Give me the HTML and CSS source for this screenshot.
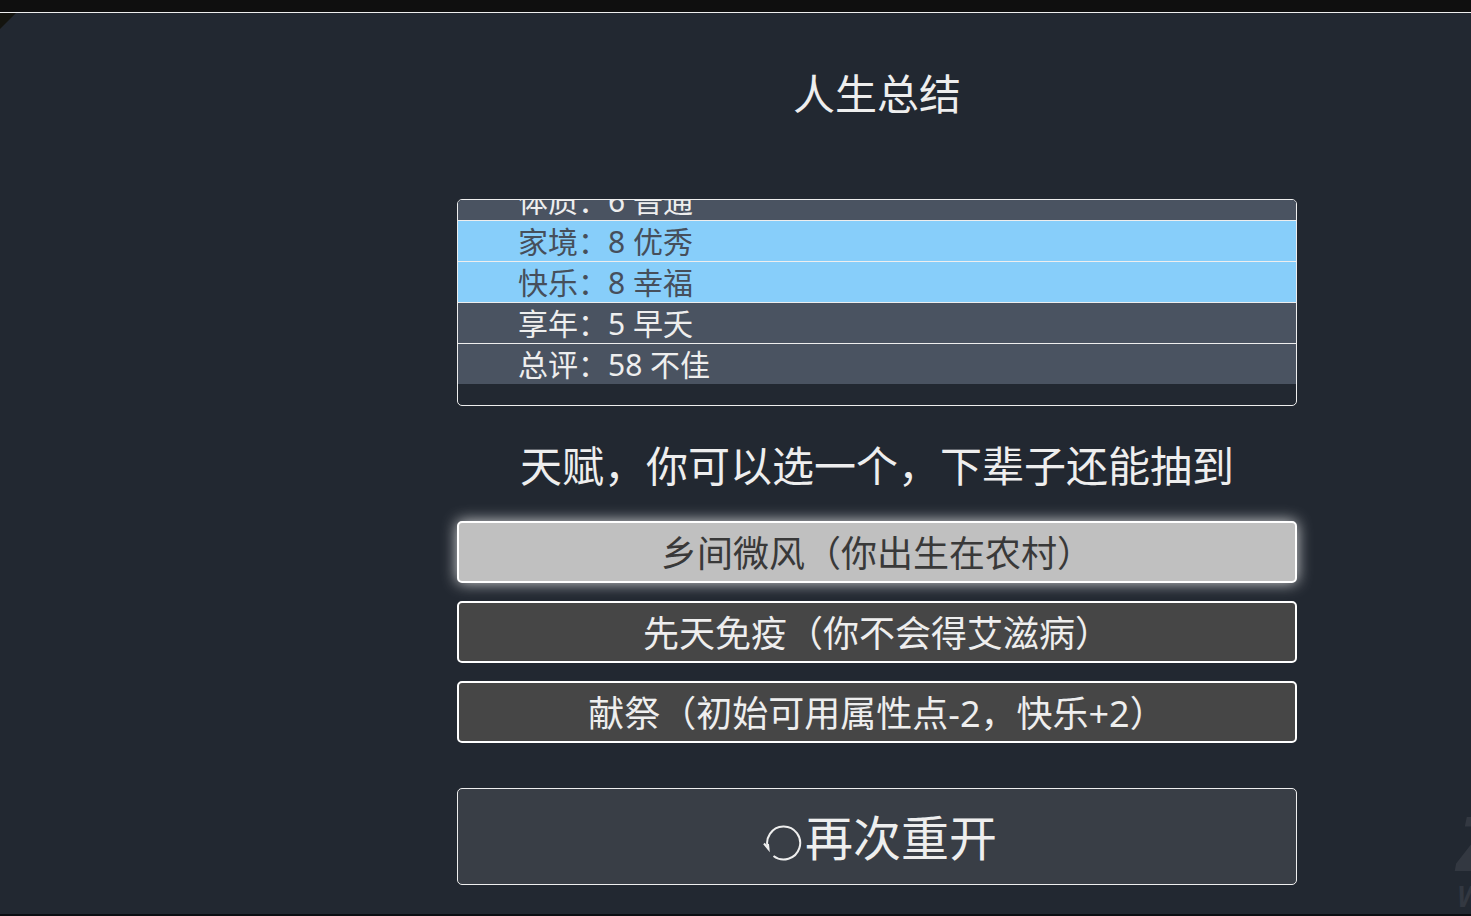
FILE: index.html
```html
<!DOCTYPE html>
<html lang="zh-CN">
<head>
    <meta charset="UTF-8">
    <meta name="viewport" content="width=device-width, initial-scale=1.0">
    <title>人生总结</title>
    <link rel="stylesheet" href="styles.css">
</head>
<body>
    <div class="topbar"></div>

    <main class="page">
        <div class="corner"></div>

        <div class="summary">
            <h1>人生总结</h1>

            <ul class="judge">
                <li>体质：6 普通</li>
                <li class="grade">家境：8 优秀</li>
                <li class="grade">快乐：8 幸福</li>
                <li>享年：5 早夭</li>
                <li>总评：58 不佳</li>
            </ul>

            <h2>天赋，你可以选一个，下辈子还能抽到</h2>

            <div class="talents">
                <button type="button" class="talent selected">乡间微风（你出生在农村）</button>
                <button type="button" class="talent">先天免疫（你不会得艾滋病）</button>
                <button type="button" class="talent">献祭（初始可用属性点-2，快乐+2）</button>
            </div>

            <button type="button" class="again">
                <svg class="again-icon" viewBox="0 0 48 48" aria-hidden="true">
                    <path d="M16.5 42 A16.5 16.5 0 1 0 11.3 35"/>
                    <path d="M7 29.5 L11.5 35 L11 30"/>
                </svg>
                <span>再次重开</span>
            </button>
        </div>

        <div class="mark">
            <span class="mark-big">Z</span>
            <span class="mark-small">W</span>
        </div>
    </main>
</body>
</html>
```

FILE: styles.css
```css
* {
    box-sizing: border-box;
}
body {
    margin: 0;
    min-height: 100vh;
    display: flex;
    flex-direction: column;
    background-color: #222831;
    color: #eee;
    font-family: "Noto Sans", "Noto Sans CJK SC", sans-serif;
    border-bottom: 2px solid #0b0d12;
}
.topbar {
    height: 13px;
    background-color: #0f0f0f;
    border-bottom: 1px solid #eee;
}
.page {
    position: relative;
    flex: 1;
    display: flex;
    justify-content: center;
    padding: 53px 0 29px 283px;
    overflow: hidden;
}
.corner {
    position: absolute;
    top: 0;
    left: 0;
    border-top: 16px solid #14140f;
    border-right: 16px solid transparent;
}
.summary {
    width: 100%;
    max-width: 840px;
    display: flex;
    flex-direction: column;
}
h1, h2 {
    margin: 0;
    font-size: 42px;
    line-height: 56px;
    font-weight: 400;
    text-align: center;
}

/* scrolled to the end, so the first row is cut by the top edge */
.judge {
    height: 207px;
    margin: 77px 0 32px;
    padding: 0 0 21px;
    list-style: none;
    display: flex;
    flex-direction: column;
    justify-content: flex-end;
    border: 1px solid #eee;
    border-radius: 5px;
    overflow: hidden;
}
.judge li {
    flex: none;
    padding: 2px 0 0 60px;
    border-top: 1px solid #eee;
    background-color: #4a5361;
    font-size: 30px;
    line-height: 38px;
}
.judge .grade {
    background-color: #87cefa;
    color: #464f5b;
}

.talents {
    display: flex;
    flex-direction: column;
    gap: 18px;
    margin: 27px 0 45px;
}
button {
    font-family: inherit;
    color: #eee;
    border-radius: 5px;
    cursor: pointer;
}
.talent {
    padding: 6px 4px 2px;
    border: 2px solid #fff;
    background-color: #464646;
    font-size: 36px;
    line-height: 50px;
}
.selected {
    background-color: #c0c0c0;
    color: #393939;
    box-shadow: 0 0 15px rgba(255, 255, 255, 0.8);
}
.again {
    display: flex;
    align-items: center;
    justify-content: center;
    padding: 16px 15px 14px;
    border: 1px solid #eee;
    background-color: #393e46;
    font-size: 48px;
    line-height: 65px;
}
.again-icon {
    width: 48px;
    height: 48px;
    fill: none;
    stroke: #eee;
    stroke-width: 2;
}

/* faint site mark running off the right edge */
.mark {
    position: absolute;
    left: calc(100% - 14px);
    bottom: 0;
    display: flex;
    flex-direction: column;
    color: #333841;
    font-weight: 700;
    font-style: italic;
    pointer-events: none;
}
.mark-big {
    font-size: 76px;
    line-height: 72px;
}
.mark-small {
    font-size: 28px;
    line-height: 36px;
}
```
